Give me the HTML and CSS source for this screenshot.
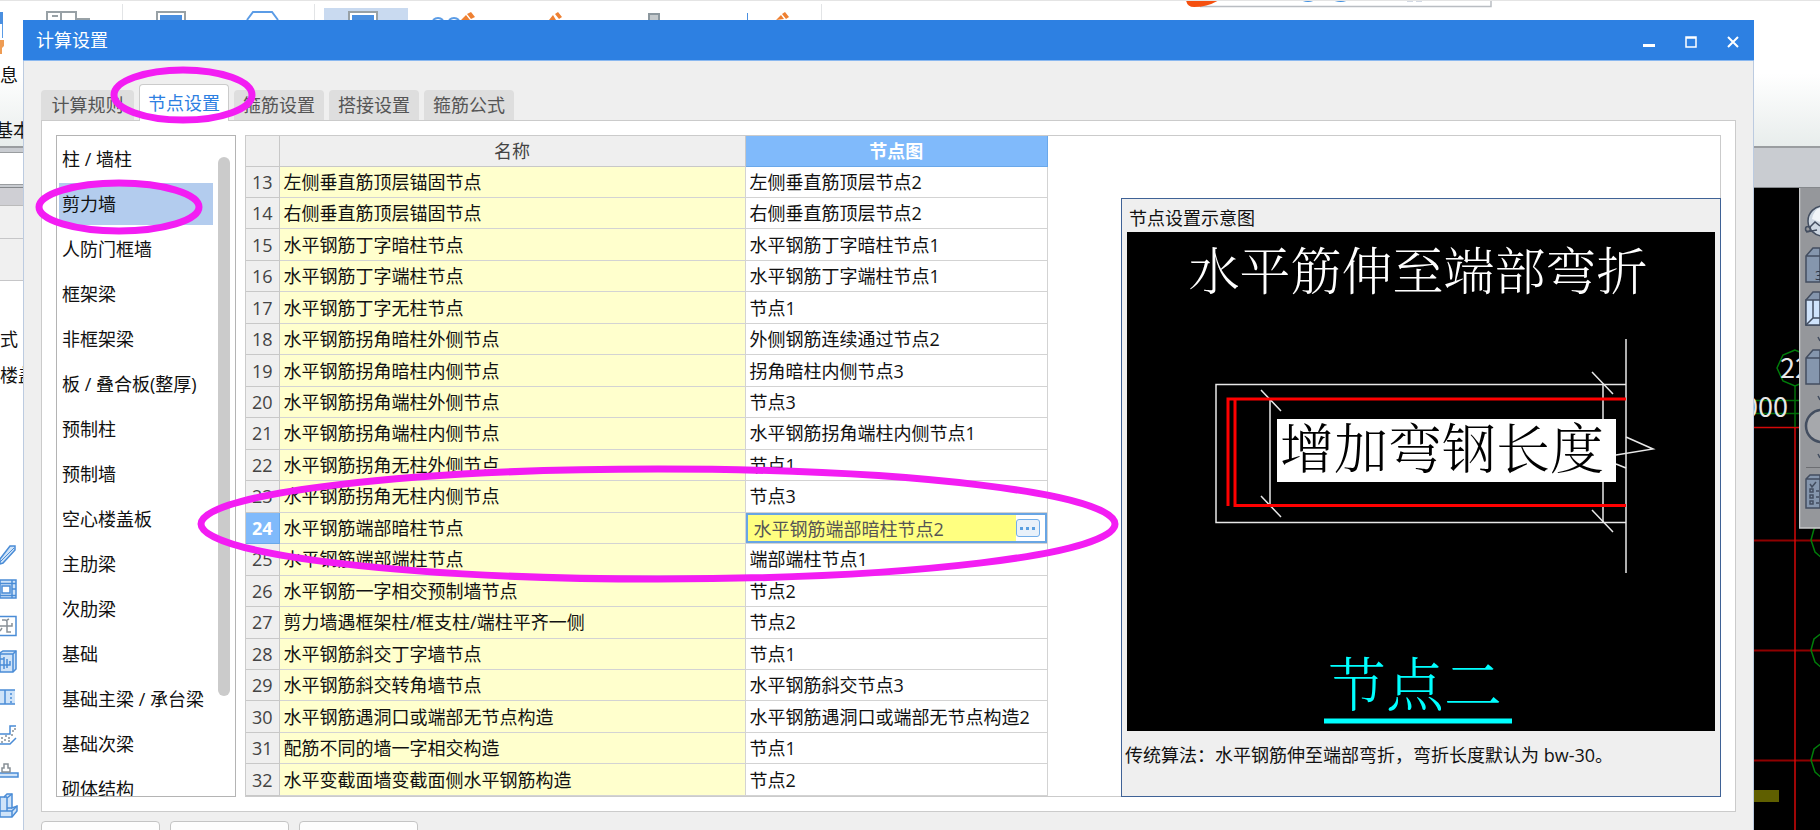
FILE: index.html
```html
<!DOCTYPE html>
<html lang="zh-CN">
<head>
<meta charset="utf-8">
<title>计算设置</title>
<link rel="stylesheet" href="styles.css">
</head>
<body>
<div class="app">
  <header class="ribbon">
    <svg class="ribbon-icons" width="1520" height="62" fill="none">
      <path d="M78 0.5H189" stroke="#a9cff5"/>
      <path d="M122.500 4V20M314.500 4V20M821.500 4V20" stroke="#e2e4e6"/>
      <path d="M47 20V12H76V20M61 12V20M52 16H58M76 19H90" stroke="#98a1a6" stroke-width="2"/>
      <path d="M157 20V12H185V20" stroke="#98a1a6" stroke-width="2"/><path d="M160 15H182V20H160z" fill="#4a8fe0"/>
      <path d="M247 20L253 12H272L278 20" stroke="#5b9ce6" stroke-width="2"/>
      <path d="M324 8H408V20H324z" fill="#c9daf0"/>
      <path d="M349 20V12H377V20" stroke="#98a1a6" stroke-width="2" fill="#fff"/><path d="M352 15H374V20H352z" fill="#4a8fe0"/>
      <path d="M433 20Q438 16 443 20M449 20Q454 16 459 20" stroke="#5b9ce6" stroke-width="2"/>
      <path d="M460 21L466 15L470 20M467 14L471 12L475 17L471 19zM549 20L553 15L556 20M555 14L558 12L562 17L559 19zM776 20L781 15L784 19M782 14L785 12L789 17L786 19z" fill="#ee8032"/>
      <path d="M649 20V14H659V20" stroke="#8c979e" stroke-width="2" fill="#c4c9cc"/>
      <path d="M747.500 13V20" stroke="#4a8fe0"/>
      <path d="M1200 0H1491V6.500H1200" fill="#fff" stroke="#b9bdc2" stroke-width="1.500"/>
      <path d="M1186 0Q1187 7 1194 7Q1208 7 1219 0z" fill="#f5500f"/>
      <path d="M1303 0Q1308 2 1313 0M1335 0Q1341 2 1346 0" stroke="#3f8fe0" stroke-width="2"/><path d="M1407 0h6M1416 0h6" stroke="#a5b4cc" stroke-width="3"/>
      <path d="M2.500 12V38" stroke="#5b9ce6"/><path d="M0 12H3V24H0z" fill="#4a8fe0"/><path d="M0 40H4V46L2 48V54H0z" fill="#ee9c54"/>
    </svg>
    <span class="ribbon-label">信息</span>
    <span class="ribbon-group">基本</span>
  </header>
  <div class="toolbar"><div class="toolbar-field"></div></div>
  <div class="workspace">
    <aside class="navigator">
      <div class="nav-head"></div>
      <div class="nav-row"></div>
      <div class="nav-row"></div>
      <div class="nav-list">
        <span>式</span>
        <span>楼盖</span>
      </div>
      <svg class="nav-icons" width="23" height="290" fill="none" stroke="#4a8cd6" stroke-width="1.500">
        <path d="M0 19L10 6H15V10L3 23L0 24z" fill="#cfe3f8"/><path d="M0 22L14 8" stroke-width="1"/>
        <path d="M0 40H16V58H0z" fill="#cfe3f8"/><path d="M2 46H10V53H2zM12 40V58M0 43.500H16M0 55.500H16M12 49H16" fill="#fff"/>
        <path d="M0 76.500H16V95.500H0"/><path d="M0 86H12V83M2 80H5Q7 80 7 82V92H11M0 91L2 88M7 80L9 79" stroke="#889096"/>
        <path d="M0 113L3 111H16V129L13 132H0z" fill="#cfe3f8"/><path d="M0 114H13V132M13 114L16 111M0 125H10V121M4 117V129M0 119H4M7 119V128"/>
        <path d="M0 150H15V164H0z" fill="#cfe3f8" stroke="none"/><path d="M0 150H15M0 164H15M5 150V164"/><path d="M11 153V163" stroke-dasharray="2 2"/>
        <path d="M0 194H10V186H16M0 204H10L16 198"/><path d="M1 198h2M4 200h2M8 198h2M12 191h2M11 195h2M14 189h2M5 196h2M1 202h2M8 201h2" stroke="#889096"/>
        <path d="M0 233H18V237H0" fill="#cfe3f8"/><path d="M2 232V228H4V224H8V228H10V232z" stroke="#889096"/>
        <path d="M0 257H4L7 254H12V268L17 266V271L12 277H0z" fill="#cfe3f8"/><path d="M0 271H12L17 266M12 271V277M7 271V258L12 254M4 257H7M7 268H12"/>
      </svg>
    </aside>
    <div class="canvas">
      <svg class="drawing" width="66" height="642" fill="none">
        <path d="M0 352.500H66M0 462.500H66M0 572.500H66" stroke="#8f0000" stroke-width="2"/>
        <path d="M0 239.500H66M41 239V642" stroke="#d40808" stroke-width="1.500"/>
        <path d="M0 212.500H66M0 225.500H66M41 198V239" stroke="#006e08" stroke-width="1.500"/>
        <path d="M41 162L29 167L23 180L29 193L41 198L53 193L59 180L53 167zM69 334L60 341L57 352L61 364L69 371M69 444L60 451L57 462L61 474L69 481M69 554L60 561L57 572L61 584L69 591" stroke="#007c0a" stroke-width="1.500"/>
        <path d="M0 602H25V614H0z" fill="#5f5f00"/>
        <text class="axis" x="26" y="190">22</text>
        <text class="axis" x="34" y="229" text-anchor="end">000</text>
      </svg>
      <svg class="view-dock" width="21" height="341" fill="#8596ad" stroke="#434e60" stroke-width="1.500">
        <path d="M0 0H21V340H0z" fill="#95979b" stroke="none"/><path d="M.5 0V340H21" fill="none" stroke="#c9cacc"/>
        <circle cx="24" cy="33" r="15" fill="#cdd7e2"/><path d="M13 31Q15 21 21 20V34z" fill="#f1f5f9" stroke="none"/><path d="M10 40L16 34L21 38" fill="none"/><circle cx="9" cy="41" r="2.500" fill="none"/><path d="M7 44L18 42" />
        <path d="M7 68L14 60H21V94H7zM7 68H21"/><text class="dock-text" x="16" y="92">3</text>
        <path d="M7 112L14 104H21V137H7z"/><path d="M7 112H21V137H7z" fill="#cfe3fb"/><path d="M14 112V130H21M14 130L7 137" fill="none"/>
        <path d="M7 170L14 162H21V196H7zM7 170H21"/>
        <circle cx="23" cy="238" r="16" fill="#a6a8ac" stroke-width="2.500"/>
        <path d="M19 149l2 4M19 208l2 4M19 266l2 4"/><path d="M7 279.500H21" fill="none" stroke="#6c6e72" stroke-width="1"/>
        <path d="M7 291L11 287H21V320H7zM7 291H21"/><path d="M11 296l2 3 4-5M11 301h3v3h-3zM11 307h3v3h-3zM11 313h3v3h-3zM17 303h3M17 309h3M17 315h3" fill="none"/>
      </svg>
    </div>
  </div>
</div>

<section class="dialog">
  <div class="titlebar">
    <h1>计算设置</h1>
    <button type="button" aria-label="最小化"><svg width="12" height="12"><path d="M0 8H12V11H0z" fill="#fff"/></svg></button>
    <button type="button" aria-label="最大化"><svg width="12" height="12"><path d="M1 1H11V11H1zM1 2H11" fill="none" stroke="#fff" stroke-width="1.500"/></svg></button>
    <button type="button" aria-label="关闭"><svg width="12" height="12"><path d="M1 1L11 11M11 1L1 11" stroke="#fff" stroke-width="2"/></svg></button>
  </div>
  <nav class="tabs">
    <button type="button">计算规则</button>
    <button type="button" class="active">节点设置</button>
    <button type="button">箍筋设置</button>
    <button type="button">搭接设置</button>
    <button type="button">箍筋公式</button>
  </nav>
  <div class="panel">
    <div class="categories">
      <ul>
        <li>柱 / 墙柱</li>
        <li class="selected">剪力墙</li>
        <li>人防门框墙</li>
        <li>框架梁</li>
        <li>非框架梁</li>
        <li>板 / 叠合板(整厚)</li>
        <li>预制柱</li>
        <li>预制墙</li>
        <li>空心楼盖板</li>
        <li>主肋梁</li>
        <li>次肋梁</li>
        <li>基础</li>
        <li>基础主梁 / 承台梁</li>
        <li>基础次梁</li>
        <li>砌体结构</li>
      </ul>
      <div class="scrollbar"></div>
    </div>
    <div class="content">
      <table>
        <colgroup><col class="col-no"><col class="col-name"><col class="col-node"></colgroup>
        <thead><tr><th></th><th>名称</th><th class="current">节点图</th></tr></thead>
        <tbody>
          <tr><th>13</th><td>左侧垂直筋顶层锚固节点</td><td>左侧垂直筋顶层节点2</td></tr>
          <tr><th>14</th><td>右侧垂直筋顶层锚固节点</td><td>右侧垂直筋顶层节点2</td></tr>
          <tr><th>15</th><td>水平钢筋丁字暗柱节点</td><td>水平钢筋丁字暗柱节点1</td></tr>
          <tr><th>16</th><td>水平钢筋丁字端柱节点</td><td>水平钢筋丁字端柱节点1</td></tr>
          <tr><th>17</th><td>水平钢筋丁字无柱节点</td><td>节点1</td></tr>
          <tr><th>18</th><td>水平钢筋拐角暗柱外侧节点</td><td>外侧钢筋连续通过节点2</td></tr>
          <tr><th>19</th><td>水平钢筋拐角暗柱内侧节点</td><td>拐角暗柱内侧节点3</td></tr>
          <tr><th>20</th><td>水平钢筋拐角端柱外侧节点</td><td>节点3</td></tr>
          <tr><th>21</th><td>水平钢筋拐角端柱内侧节点</td><td>水平钢筋拐角端柱内侧节点1</td></tr>
          <tr><th>22</th><td>水平钢筋拐角无柱外侧节点</td><td>节点1</td></tr>
          <tr><th>23</th><td>水平钢筋拐角无柱内侧节点</td><td>节点3</td></tr>
          <tr><th class="current">24</th><td>水平钢筋端部暗柱节点</td><td class="editing"><div class="editor"><input type="text" aria-label="节点图" value="水平钢筋端部暗柱节点2"><button type="button" aria-label="选择节点"><svg width="16" height="4"><path d="M0 1h3v3H0zM6 1h3v3H6zM12 1h3v3h-3z" fill="#5a9fe0"/></svg></button></div></td></tr>
          <tr><th>25</th><td>水平钢筋端部端柱节点</td><td>端部端柱节点1</td></tr>
          <tr><th>26</th><td>水平钢筋一字相交预制墙节点</td><td>节点2</td></tr>
          <tr><th>27</th><td>剪力墙遇框架柱/框支柱/端柱平齐一侧</td><td>节点2</td></tr>
          <tr><th>28</th><td>水平钢筋斜交丁字墙节点</td><td>节点1</td></tr>
          <tr><th>29</th><td>水平钢筋斜交转角墙节点</td><td>水平钢筋斜交节点3</td></tr>
          <tr><th>30</th><td>水平钢筋遇洞口或端部无节点构造</td><td>水平钢筋遇洞口或端部无节点构造2</td></tr>
          <tr><th>31</th><td>配筋不同的墙一字相交构造</td><td>节点1</td></tr>
          <tr><th>32</th><td>水平变截面墙变截面侧水平钢筋构造</td><td>节点2</td></tr>
        </tbody>
      </table>
      <section class="preview">
        <h2>节点设置示意图</h2>
        <svg class="diagram" viewBox="0 0 588 499" fill="none">
          <text class="cad" x="291" y="58" text-anchor="middle" fill="#fff">水平筋伸至端部弯折</text>
          <g stroke="#e8e8e8" stroke-width="1.500">
            <path d="M499 152.500H89V290.500H499M499 107V341"/>
            <path d="M143 167V273M476 152V291"/>
            <path d="M134 158L154 179M134 264L154 285M465 140L486 162M465 278L486 300"/>
            <path d="M499 205L526 217L489 223M489 232L499 236"/>
          </g>
          <path d="M101 274V167H499M108 167V273.500H499" stroke="#f00" stroke-width="3"/>
          <path d="M150 187H489V250H150z" fill="#fff"/>
          <text class="cad label" x="315" y="237" text-anchor="middle" fill="#000">增加弯钢长度</text>
          <text class="cad name" x="288" y="474" text-anchor="middle" fill="#0ff">节点二</text>
          <path d="M197 489H385" stroke="#0ff" stroke-width="5"/>
        </svg>
        <p>传统算法：水平钢筋伸至端部弯折，弯折长度默认为 bw-30。</p>
      </section>
    </div>
  </div>
  <footer>
    <button type="button" aria-label="导入规则"></button>
    <button type="button" aria-label="导出规则"></button>
    <button type="button" aria-label="恢复默认"></button>
  </footer>
</section>

<svg class="marks" width="1200" height="640" fill="none" stroke="#f31df3" stroke-width="7">
  <ellipse cx="183" cy="95" rx="69" ry="25"/>
  <ellipse cx="119" cy="207" rx="80" ry="24"/>
  <ellipse cx="658" cy="524" rx="457" ry="55"/>
</svg>
</body>
</html>
```
FILE: styles.css
```css
* { box-sizing: border-box; }

body {
  margin: 0;
  height: 100vh;
  overflow: hidden;
  position: relative;
  font: 18px/24px "Open Sans", "Noto Sans CJK SC", sans-serif;
  color: #111;
}

button, input { font: inherit; color: inherit; padding: 0; margin: 0; border: 0; }
h1, h2, p, ul { margin: 0; padding: 0; font: inherit; list-style: none; }

/* main window behind the dialog */
.app { height: 100%; display: flex; flex-direction: column; }
.ribbon {
  position: relative;
  height: 146px;
  flex: none;
  overflow: hidden;
  border-top: 1px solid #e4e4e4;
  background: linear-gradient(#fff 50%, #e8edec);
}
.ribbon-icons { position: absolute; left: 0; top: -1px; }
.ribbon-label { position: absolute; left: -18px; top: 62px; }
.ribbon-group { position: absolute; left: -5px; top: 117px; }
.toolbar {
  flex: none;
  height: 42px;
  padding: 4px 0;
  border-top: 2px solid #9a9da0;
  border-bottom: 1px solid #85888c;
  background: #c9ccd1;
}
.toolbar-field { width: 200px; height: 33px; background: #fff; border: 1px solid #9a9da0; border-left: 0; }
.workspace { flex: 1; display: flex; }
.navigator { position: relative; width: 240px; background: #fff; }
.nav-head { height: 18px; background: #cfcfd4; border-bottom: 1px solid #bbb; }
.nav-row { height: 33px; background: #f0f0f0; border-bottom: 1px solid #c6c6c8; }
.nav-row + .nav-row { height: 42px; }
.nav-list { display: flex; flex-direction: column; gap: 12px; padding-top: 46px; }
.nav-icons { position: absolute; left: 0; top: 352px; }
.canvas { position: relative; flex: 1; background: #000; }
.drawing, .view-dock { position: absolute; right: 0; top: 0; }
.axis { font: 27px "Noto Sans CJK SC", sans-serif; fill: #e8e8e8; }
.dock-text { font-size: 13px; fill: #2c3648; stroke: none; }

/* dialog */
.dialog {
  position: absolute;
  inset: 20px 66px -40px 23px;
  display: flex;
  flex-direction: column;
  background: #efefef;
  border: 1px solid #bccbe0;
  border-top: 0;
}
.titlebar {
  display: flex;
  align-items: center;
  height: 41px;
  margin: 0 -1px;
  padding-left: 13px;
  color: #fff;
  background: #2d80e2;
  border-bottom: 1px solid #8ab8f0;
}
.titlebar h1 { flex: 1; }
.titlebar button { width: 42px; height: 40px; background: none; }
.titlebar svg { vertical-align: middle; }

.tabs { display: flex; align-items: flex-end; gap: 5px; height: 59px; padding-left: 17px; }
.tabs button {
  width: 90px;
  height: 30px;
  color: #555;
  background: #dedede;
  border-radius: 4px 4px 0 0;
}
.tabs button:first-child { width: 93px; }
.tabs .active {
  position: relative;
  height: 37px;
  margin-bottom: -1px;
  padding-bottom: 1px;
  color: #2d80e2;
  background: #fff;
  border: 1px solid #cbcbcb;
  border-bottom: 0;
}

.panel {
  flex: 1;
  display: flex;
  gap: 9px;
  margin: 0 17px;
  padding: 14px;
  background: #fff;
  border: 1px solid #cbcbcb;
}
.categories {
  display: flex;
  width: 180px;
  height: 662px;
  max-height: 100%;
  overflow: hidden;
  border: 1px solid #b4b4b4;
}
.categories ul { flex: 1; display: flex; flex-direction: column; gap: 3px; padding: 2px 0 0 2px; height: 0; }
.categories li { flex: none; width: 154px; height: 42px; line-height: 42px; padding-left: 3px; white-space: nowrap; }
.categories .selected { background: #b3ccee; }
.scrollbar { width: 12px; margin: 21px 5px 100px 0; border-radius: 6px; background: #cbcbcb; }

.content {
  flex: 1;
  display: flex;
  justify-content: space-between;
  border: 1px solid #cbcbcb;
}
table { width: 802px; height: 100%; table-layout: fixed; border-collapse: collapse; }
.col-no { width: 33px; }
.col-name { width: 466px; }
tbody tr { height: 31px; }
th, td { padding: 0 4px; border: 1px solid #d3d3d3; border-top: 0; text-align: left; white-space: nowrap; line-height: 24px; }
th { padding: 0; text-align: center; font-weight: 400; color: #444; background: #efefef; border-color: #c8c8c8; }
thead th { height: 30px; }
th:first-child { border-left: 0; }
td:nth-child(2) { background: #ffffcd; }
th.current { color: #fff; background: #80bafb; border-color: #6aa8ea; font-weight: 700; }
td.editing { padding: 0; }
.editor { display: flex; align-items: center; height: 30px; border: 2px solid #68a5e4; background: #fff; }
.editor input { flex: 1; min-width: 0; height: 26px; padding-left: 6px; color: #555; background: #ffff80; }
.editor button {
  display: flex;
  align-items: center;
  justify-content: center;
  width: 24px;
  height: 18px;
  margin-right: 5px;
  background: #e9f1fa;
  border: 1px solid #72aeea;
  border-radius: 3px;
}

.preview {
  display: flex;
  flex-direction: column;
  width: 600px;
  margin: 62px -1px -1px 0;
  padding: 7px 5px 0;
  background: #efefef;
  border: 1px solid #3f6296;
}
.preview h2 { height: 26px; padding-left: 2px; }
.diagram { display: block; width: 100%; background: #000; }
.preview p { margin: 12px -2px 0; white-space: nowrap; }
.cad { font: 300 51px "Noto Serif CJK SC", "Noto Sans CJK SC", serif; }
.cad.label { font-size: 54px; }
.cad.name { font-size: 58px; }

footer { display: flex; gap: 10px; height: 57px; padding: 9px 17px; }
footer button { width: 119px; height: 34px; background: #fdfdfd; border: 1px solid #c4c4c4; border-radius: 4px; }

.marks { position: absolute; left: 0; top: 0; pointer-events: none; }
```
